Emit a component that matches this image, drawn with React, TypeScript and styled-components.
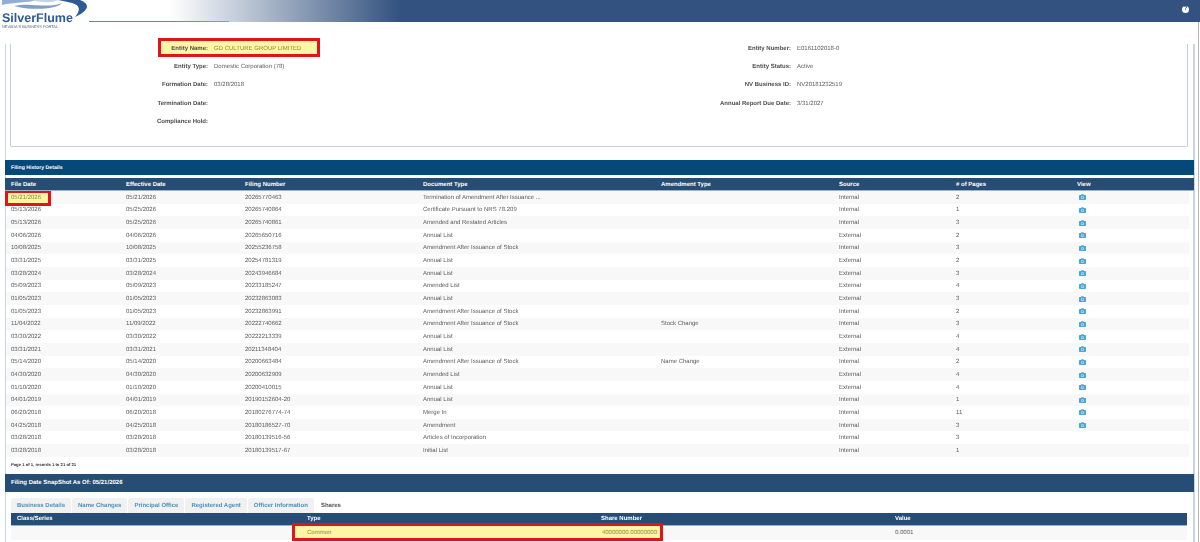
import React from "react";
import styled, { createGlobalStyle } from "styled-components";

const Global = createGlobalStyle`
  html, body { margin: 0; padding: 0; height: 100%; background: #fff; overflow: hidden; }
  body { font-family: "Liberation Sans", Arial, sans-serif; font-size: 6px; color: #5c5c5c; text-rendering: geometricPrecision; }
  #root { height: 542px; overflow: hidden; }
`;
const Page = styled.div`display:flex;flex-direction:column;height:542px;position:relative;overflow:hidden;filter:blur(.3px);
  &::after{content:"";position:absolute;left:1198px;top:22px;bottom:0;width:1px;background:#b5b5b5;}`;
const Header = styled.header`height:22px;flex:none;position:relative;background:linear-gradient(90deg,#fff 0,#fff 170px,#33527f 400px,#33527f 100%);`;
const HeaderRule = styled.div`position:absolute;left:89px;top:21px;width:140px;height:1px;background:linear-gradient(90deg,#6d84a5 0,#6d84a5 60%,#8ea0ba 100%);`;
const Help = styled.div`position:absolute;left:1182px;top:5.500px;width:7px;height:7px;border-radius:50%;background:#fff;color:#33527f;font-size:6px;font-weight:700;line-height:7px;text-align:center;`;
const Logo = styled.div`position:absolute;left:2px;top:0;width:88px;height:30px;`;
const LogoText = styled.div`position:absolute;left:0;top:12px;color:#2d5b93;font-size:12.5px;font-weight:700;line-height:13px;white-space:nowrap;`;
const LogoSub = styled.div`position:absolute;left:0;top:25px;color:#52617c;font-size:3.9px;line-height:4px;white-space:nowrap;`;
const Main = styled.main`flex:1;padding:16px 6px 0 5px;display:flex;flex-direction:column;position:relative;
  &::before{content:"";position:absolute;left:5px;top:22px;bottom:0;width:1px;background:#c9d4e0;}
  &::after{content:"";position:absolute;left:1193px;top:22px;bottom:0;width:2px;background:#c9d4e0;}`;
const Summary = styled.section`margin:6px 6px 0 5px;height:102px;border:1px solid #c3cfdc;border-top:none;border-radius:0 0 2px 2px;display:grid;grid-template-columns:1fr 1fr;`;
const InfoCol = styled.div`display:flex;flex-direction:column;margin-top:-4px;`;
const InfoRow = styled.div`height:18.2px;display:flex;align-items:center;position:relative;`;
const InfoLabel = styled.span<{ $w: number }>`width:${p=>p.$w}px;text-align:right;font-weight:700;color:#4f4f4f;flex:none;white-space:nowrap;`;
const InfoValue = styled.span`margin-left:6px;white-space:nowrap;`;
const Highlight = styled.span`position:absolute;background:#fdf6a6;border:3px solid #e0141c;box-sizing:border-box;`;
const Lifted = styled.span`position:relative;color:#8f8a3e;`;
const LiftedLabel = styled(InfoLabel)`position:relative;`;
const SectionBar = styled.div`margin-top:13px;height:15px;background:#05497a;color:#fff;font-weight:700;font-size:5.2px;line-height:16.500px;padding-left:6px;position:relative;z-index:1;`;
const TableHead = styled.div`margin-top:3px;height:12px;background:#264d75;border-bottom:1px solid #9fb2c6;color:#fff;font-weight:700;position:relative;z-index:1;`;
const GridRow = styled.div`display:grid;grid-template-columns:115px 119px 178px 238px 178px 117px 121px 1fr;padding:1px 0 0 6px;box-sizing:border-box;align-items:center;`;
const HeadRow = styled(GridRow)`height:12px;`;
const Row = styled(GridRow)<{ $alt: boolean }>`height:12.66px;background:${p=>p.$alt?"#f8f8f8":"#fff"};margin:0 5px 0 1px;padding-left:5px;`;
const Cell = styled.span`white-space:nowrap;position:relative;`;
const Pager = styled.div`font-size:4.2px;line-height:5px;font-weight:700;color:#333;padding:5px 0 0 6px;height:17px;box-sizing:border-box;`;
const SnapBar = styled.div`height:18px;background:#264d75;color:#fff;font-weight:700;font-size:6px;line-height:18px;padding-left:6px;position:relative;z-index:1;`;
const Tabs = styled.div`display:flex;gap:1px;margin:6px 0 0 6px;height:15px;`;
const Tab = styled.div<{ $active?: boolean }>`padding:0 6px;line-height:16px;font-weight:700;color:${p=>p.$active?"#555":"#4b93bd"};background:${p=>p.$active?"#fff":"#f1f1f1"};border-radius:2px 2px 0 0;`;
const SharesHead = styled.div`margin:0 7px 0 6px;height:13px;box-sizing:border-box;background:#264d75;border-bottom:1px solid #9fb2c6;color:#fff;font-weight:700;display:grid;grid-template-columns:290px 294px 294px 1fr;padding:1px 0 0 6px;align-items:center;`;
const SharesRow = styled.div`margin:0 7px 0 6px;height:14px;box-sizing:border-box;background:#f8f8f8;display:grid;grid-template-columns:290px 294px 294px 1fr;padding:1px 0 0 6px;align-items:center;position:relative;`;
const ShareValue = styled(Lifted)`display:block;width:56px;text-align:right;white-space:nowrap;`;
const CameraSvg = styled.svg`display:block;margin:-1px 0 0 2px;`;

const rows: string[][] = [
["05/21/2026","05/21/2026","20265770463","Termination of Amendment After Issuance ...","","Internal","2","y"],
["05/13/2026","05/25/2026","20265740864","Certificate Pursuant to NRS 78.209","","Internal","1","y"],
["05/13/2026","05/25/2026","20265740861","Amended and Restated Articles","","Internal","3","y"],
["04/06/2026","04/06/2026","20265650716","Annual List","","External","2","y"],
["10/08/2025","10/08/2025","20255236758","Amendment After Issuance of Stock","","Internal","3","y"],
["03/31/2025","03/31/2025","20254781319","Annual List","","External","2","y"],
["03/28/2024","03/28/2024","20243946684","Annual List","","External","3","y"],
["05/09/2023","05/09/2023","20233185247","Amended List","","External","4","y"],
["01/05/2023","01/05/2023","20232863083","Annual List","","External","3","y"],
["01/05/2023","01/05/2023","20232863991","Amendment After Issuance of Stock","","Internal","2","y"],
["11/04/2022","11/09/2022","20222740662","Amendment After Issuance of Stock","Stock Change","Internal","3","y"],
["03/30/2022","03/30/2022","20222213339","Annual List","","External","4","y"],
["03/31/2021","03/31/2021","20211348404","Annual List","","External","4","y"],
["05/14/2020","05/14/2020","20200663484","Amendment After Issuance of Stock","Name Change","Internal","2","y"],
["04/30/2020","04/30/2020","20200632909","Amended List","","External","4","y"],
["01/10/2020","01/10/2020","20200410015","Annual List","","External","4","y"],
["04/01/2019","04/01/2019","20190152604-20","Annual List","","Internal","1","y"],
["06/20/2018","06/20/2018","20180276774-74","Merge In","","Internal","11","y"],
["04/25/2018","04/25/2018","20180186527-70","Amendment","","Internal","3","y"],
["03/28/2018","03/28/2018","20180139516-56","Articles of Incorporation","","Internal","3",""],
["03/28/2018","03/28/2018","20180139517-67","Initial List","","Internal","1",""],
];
const heads=["File Date","Effective Date","Filing Number","Document Type","Amendment Type","Source","# of Pages","View"];

const CameraIcon = () => (
  <CameraSvg width="7" height="6" viewBox="0 0 14 12">
    <path d="M1.5 2h2.6L5 .5h4L9.9 2h2.6A1.5 1.5 0 0 1 14 3.5v7a1.5 1.5 0 0 1-1.5 1.5h-11A1.5 1.5 0 0 1 0 10.500v-7A1.5 1.500 0 0 1 1.500 2z" fill="#4ba6d8"/>
    <circle cx="7" cy="6.800" r="3" fill="#cfe7f4"/>
    <circle cx="7" cy="6.800" r="1.700" fill="#4ba6d8"/>
  </CameraSvg>
);

export default function App() {
  return (
    <Page>
      <Global />
      <Header>
        <HeaderRule />
        <Logo>
          <svg width="88" height="30" viewBox="0 0 88 30" style={{position:"absolute",left:0,top:0}}>
            <path d="M0 0H34C26 3 12 2 0 5Z" fill="#8fb0d4"/>
            <path d="M12 6C28 2 46 9 60 3C56 9 30 11 12 6Z" fill="#7f9fc6"/>
            <path d="M30 0H56C50 3 40 3 30 0Z" fill="#c4d4e6"/>
            <path d="M56 0H78C88 4 88 10 73 17C79 10 78 5 70 3C66 2 61 1 56 0Z" fill="#2d5b93"/>
          </svg>
          <LogoText>SilverFlume</LogoText>
          <LogoSub>NEVADA'S BUSINESS PORTAL</LogoSub>
        </Logo>
        <Help>?</Help>
      </Header>
      <Main>
        <Summary>
          <InfoCol>
            <InfoRow>
              <Highlight style={{left:147,top:-2,width:162,height:19}} />
              <LiftedLabel $w={197}>Entity Name:</LiftedLabel><InfoValue><Lifted>GD CULTURE GROUP LIMITED</Lifted></InfoValue>
            </InfoRow>
            <InfoRow><InfoLabel $w={197}>Entity Type:</InfoLabel><InfoValue>Domestic Corporation (78)</InfoValue></InfoRow>
            <InfoRow><InfoLabel $w={197}>Formation Date:</InfoLabel><InfoValue>03/28/2018</InfoValue></InfoRow>
            <InfoRow><InfoLabel $w={197}>Termination Date:</InfoLabel></InfoRow>
            <InfoRow><InfoLabel $w={197}>Compliance Hold:</InfoLabel></InfoRow>
          </InfoCol>
          <InfoCol>
            <InfoRow><InfoLabel $w={192}>Entity Number:</InfoLabel><InfoValue>E0161102018-0</InfoValue></InfoRow>
            <InfoRow><InfoLabel $w={192}>Entity Status:</InfoLabel><InfoValue>Active</InfoValue></InfoRow>
            <InfoRow><InfoLabel $w={192}>NV Business ID:</InfoLabel><InfoValue>NV20181232519</InfoValue></InfoRow>
            <InfoRow><InfoLabel $w={192}>Annual Report Due Date:</InfoLabel><InfoValue>3/31/2027</InfoValue></InfoRow>
          </InfoCol>
        </Summary>
        <SectionBar>Filing History Details</SectionBar>
        <TableHead><HeadRow>{heads.map(h=><span key={h}>{h}</span>)}</HeadRow></TableHead>
        <div>
          {rows.map((r,i)=>(
            <Row key={i} $alt={i%2===0}>
              {r.slice(0,7).map((c,j)=>(
                <Cell key={j}>
                  {i===0&&j===0?<><Highlight style={{left:-6,top:-5,width:46,height:16}} /><Lifted>{c}</Lifted></>:c}
                </Cell>
              ))}
              <Cell>{r[7]?<CameraIcon />:null}</Cell>
            </Row>
          ))}
        </div>
        <Pager>Page 1 of 1, records 1 to 21 of 21</Pager>
        <SnapBar>Filing Date SnapShot As Of: 05/21/2026</SnapBar>
        <Tabs>
          <Tab>Business Details</Tab><Tab>Name Changes</Tab><Tab>Principal Office</Tab><Tab>Registered Agent</Tab><Tab>Officer Information</Tab><Tab $active>Shares</Tab>
        </Tabs>
        <SharesHead><span>Class/Series</span><span>Type</span><span>Share Number</span><span>Value</span></SharesHead>
        <SharesRow>
          <Highlight style={{left:281,top:-3,width:371,height:18}} />
          <span />
          <Lifted>Common</Lifted>
          <ShareValue>40000000.00000000</ShareValue>
          <span>0.0001</span>
        </SharesRow>
      </Main>
    </Page>
  );
}
